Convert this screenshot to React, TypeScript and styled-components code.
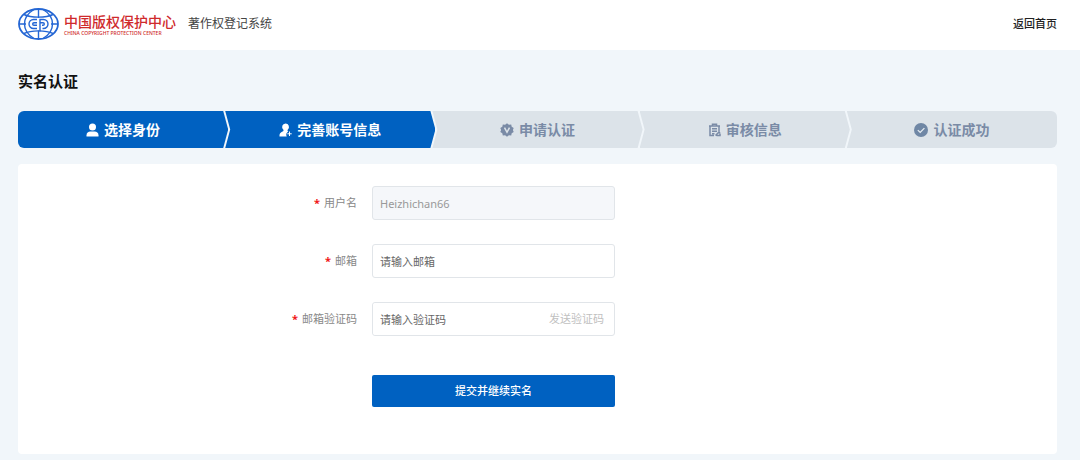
import React from "react";
import styled, { createGlobalStyle } from "styled-components";

const blue = "#0061c1";

const GlobalStyle = createGlobalStyle`
  * { box-sizing: border-box; }
  body {
    margin: 0;
    background: #f1f6fa;
    color: #111;
    font-family: "Noto Sans", "Noto Sans CJK SC", sans-serif;
    font-size: 11px;
    line-height: 16px;
  }
  button, input { font: inherit; }
`;

const Header = styled.header`
  display: flex;
  align-items: center;
  height: 50px;
  padding: 0 23px 2px 18px;
  background: #fff;
`;

const Brand = styled.div`
  display: flex;
  align-items: center;
  gap: 5px;
  color: #cf2a2c;
`;

const BrandText = styled.div`
  display: flex;
  flex-direction: column;
  white-space: nowrap;
`;

const BrandName = styled.span`
  font-family: "Noto Sans CJK SC", sans-serif;
  font-size: 14px;
  font-weight: 500;
  line-height: 18px;
`;

const BrandLatin = styled.span`
  font-family: "Noto Sans", sans-serif;
  font-size: 5px;
  font-weight: 500;
  line-height: 6px;
`;

const SystemName = styled.span`
  margin-left: 12px;
  color: #444;
  font-size: 12px;
`;

const HomeLink = styled.a`
  margin-left: auto;
  color: #222;
  font-weight: 500;
  text-decoration: none;
`;

const Main = styled.main`
  padding: 20px 23px 6px 18px;
`;

const Title = styled.h1`
  margin: 0 0 19px;
  font-size: 15px;
  font-weight: 700;
  line-height: 22px;
`;

const Steps = styled.ol`
  display: flex;
  margin: 0 0 16px;
  padding: 0;
  list-style: none;
  border-radius: 6px;
  overflow: hidden;
`;

const Step = styled.li<{ $active: boolean }>`
  display: flex;
  flex: 1;
  align-items: center;
  justify-content: center;
  gap: 5px;
  height: 37px;
  color: ${(p) => (p.$active ? "#fff" : "#7a8ba6")};
  background: ${(p) => (p.$active ? blue : "#dce3e9")};
  font-size: 14px;
  font-weight: 700;
  clip-path: polygon(0 0, calc(100% - 5px) 0, 100% 50%, calc(100% - 5px) 100%, 0 100%, 5px 50%);

  & + & { margin-left: -3px; }
  &:first-child { clip-path: polygon(0 0, calc(100% - 5px) 0, 100% 50%, calc(100% - 5px) 100%, 0 100%); }
  &:last-child { clip-path: polygon(0 0, 100% 0, 100% 100%, 0 100%, 5px 50%); }
`;

const Card = styled.section`
  padding: 22px 0 47px;
  background: #fff;
  border-radius: 4px;
`;

const Form = styled.form`
  display: flex;
  flex-direction: column;
  gap: 24px;
`;

const Row = styled.div`
  display: grid;
  grid-template-columns: minmax(100px, 339px) minmax(160px, 243px);
  column-gap: 15px;
  align-items: center;
`;

const Label = styled.label`
  color: #888;
  text-align: right;
`;

const Required = styled.span`
  margin-right: 4px;
  color: #f01818;
  font-weight: 700;
`;

const TextBox = styled.input`
  width: 100%;
  height: 34px;
  padding: 0 7px;
  color: #555;
  background: #fff;
  border: 1px solid #e1e5e9;
  border-radius: 3px;
  outline: none;

  &::placeholder { color: #666; opacity: 1; }
  &:disabled { color: #999; background: #f5f7fa; }
`;

const CodeBox = styled.div`
  display: flex;
  align-items: center;
  height: 34px;
  padding-right: 10px;
  border: 1px solid #e1e5e9;
  border-radius: 3px;
`;

const CodeInput = styled(TextBox)`
  flex: 1;
  width: auto;
  min-width: 0;
  height: 32px;
  border: 0;
`;

const SendButton = styled.button`
  padding: 0;
  color: #bfbfbf;
  background: none;
  border: 0;
`;

const SubmitButton = styled.button`
  grid-column: 2;
  height: 32px;
  margin-top: 15px;
  color: #fff;
  background: ${blue};
  border: 0;
  border-radius: 2px;
  font-weight: 500;
`;

const Emblem = () => (
  <svg width="41" height="32" viewBox="0 0 41 32" fill="none" stroke="#2466d4" strokeWidth="1.4" aria-hidden="true">
    <ellipse cx="20.5" cy="16" rx="19.5" ry="15" strokeWidth="1.8" />
    <path d="M20.5 1v9M20.5 22.500V31M1 16h7M33 16h7" />
    <path d="M6 6.500C13 10 28 10 35 6.500M6 25.500C13 22 28 22 35 25.500" />
    <path d="M16 1.500C10 5 6.500 10 6.500 16s3.500 11 9.500 14.500M25 1.500c6 3.500 9.500 8.500 9.500 14.500S31 27 25 30.500" />
    <path d="M19 11.500h-3.500a4.500 4.500 0 0 0 0 9H19M19 14.700h-3a1.300 1.300 0 0 0 0 2.600h3" />
    <path d="M22 23.500v-12h3.500a4.500 4.500 0 0 1 0 9h-1M22 14.700h3a1.300 1.300 0 0 1 0 2.600h-1" />
  </svg>
);

const UserIcon = () => (
  <svg width="13" height="14" viewBox="0 0 13 14" fill="currentColor" aria-hidden="true">
    <circle cx="6.500" cy="4" r="3.500" />
    <path d="M.5 13.500v-1.300C.5 9.700 2.300 8.500 4.400 8.500h4.200c2.100 0 3.900 1.200 3.900 3.700v1.300z" />
  </svg>
);

const UserPlusIcon = () => (
  <svg width="13" height="14" viewBox="0 0 13 14" fill="currentColor" aria-hidden="true">
    <path d="M6.500.5a3.500 3.500 0 0 1 2.200 6.200L8.500 8l.8.4a4 4 0 0 0-1.600 5.100H.5v-1.300c0-1.800 1-2.700 4-4.200L4.400 6.700A3.500 3.500 0 0 1 6.500.5z" />
    <path d="M10.500 8.500v4.500M8.300 10.800h4.400" stroke="currentColor" strokeWidth="1" />
  </svg>
);

const BadgeIcon = () => (
  <svg width="14" height="14" viewBox="0 0 14 14" aria-hidden="true">
    <path
      d="M7 .3l1.900 1.400 2.300-.2.500 2.200 2 1.300L12.900 7l.8 2-2 1.300-.5 2.200-2.300-.2L7 13.700l-1.900-1.400-2.300.2-.5-2.200-2-1.300.8-2-.8-2 2-1.300.5-2.200 2.300.2z"
      fill="currentColor"
    />
    <path d="M4.500 4.700L7 9.300l2.500-4.600" fill="none" stroke="#dce3e9" strokeWidth="1.500" />
  </svg>
);

const ReviewIcon = () => (
  <svg width="13" height="14" viewBox="0 0 13 14" fill="none" stroke="currentColor" strokeWidth="1.500" aria-hidden="true">
    <path d="M1 3h11M4.500 2.800V1.300h4v1.500M2 3v9.500h4M11 3v5.500M4 5.800h5M4 8.300h5M4 10.700h2.500" />
    <path d="M7.500 12.500l3.500-3.500 1 1M8.500 12.500H12v-2" />
  </svg>
);

const CheckIcon = () => (
  <svg width="14" height="14" viewBox="0 0 14 14" fill="none" aria-hidden="true">
    <circle cx="7" cy="7" r="7" fill="#6f87a5" />
    <path d="M3.800 7.100l2.400 2.300 4.200-4.300" stroke="#e6edf2" strokeWidth="1.300" />
  </svg>
);

const steps = [
  { label: "选择身份", Icon: UserIcon, active: true },
  { label: "完善账号信息", Icon: UserPlusIcon, active: true },
  { label: "申请认证", Icon: BadgeIcon, active: false },
  { label: "审核信息", Icon: ReviewIcon, active: false },
  { label: "认证成功", Icon: CheckIcon, active: false },
];

export default function App() {
  return (
    <>
      <GlobalStyle />
      <Header>
        <Brand>
          <Emblem />
          <BrandText>
            <BrandName>中国版权保护中心</BrandName>
            <BrandLatin>CHINA COPYRIGHT PROTECTION CENTER</BrandLatin>
          </BrandText>
        </Brand>
        <SystemName>著作权登记系统</SystemName>
        <HomeLink href="#home">返回首页</HomeLink>
      </Header>
      <Main>
        <Title>实名认证</Title>
        <Steps>
          {steps.map(({ label, Icon, active }) => (
            <Step key={label} $active={active}>
              <Icon />
              <span>{label}</span>
            </Step>
          ))}
        </Steps>
        <Card>
          <Form onSubmit={(e) => e.preventDefault()}>
            <Row>
              <Label htmlFor="username"><Required>*</Required>用户名</Label>
              <TextBox id="username" defaultValue="Heizhichan66" disabled />
            </Row>
            <Row>
              <Label htmlFor="email"><Required>*</Required>邮箱</Label>
              <TextBox id="email" type="email" placeholder="请输入邮箱" />
            </Row>
            <Row>
              <Label htmlFor="code"><Required>*</Required>邮箱验证码</Label>
              <CodeBox>
                <CodeInput id="code" placeholder="请输入验证码" />
                <SendButton type="button">发送验证码</SendButton>
              </CodeBox>
            </Row>
            <Row>
              <SubmitButton type="submit">提交并继续实名</SubmitButton>
            </Row>
          </Form>
        </Card>
      </Main>
    </>
  );
}
